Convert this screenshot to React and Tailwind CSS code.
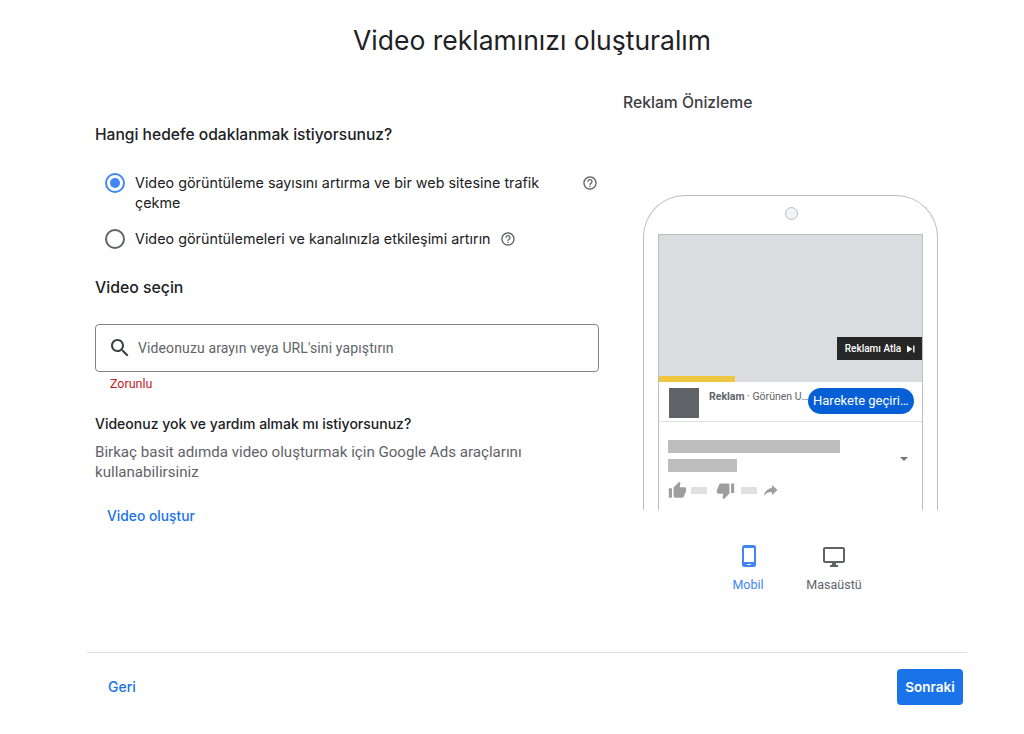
const heading = "font-['Inter',sans-serif]";

function HelpIcon() {
  return (
    <svg viewBox="0 0 24 24" className="h-4 w-4 fill-[#5f6368]">
      <path d="M11 18h2v-2h-2v2zm1-16C6.48 2 2 6.48 2 12s4.48 10 10 10 10-4.48 10-10S17.52 2 12 2zm0 18c-4.41 0-8-3.59-8-8s3.59-8 8-8 8 3.59 8 8-3.59 8-8 8zm0-14c-2.21 0-4 1.79-4 4h2c0-1.1.9-2 2-2s2 .9 2 2c0 2-3 1.75-3 5h2c0-2.25 3-2.5 3-5 0-2.21-1.79-4-4-4z" />
    </svg>
  );
}

function Radio({ checked }) {
  return (
    <span className={`flex h-5 w-5 shrink-0 items-center justify-center rounded-full border-2 ${checked ? 'border-[#4285f4]' : 'border-[#5f6368]'}`}>
      {checked ? <span className="h-[10px] w-[10px] rounded-full bg-[#4285f4]" /> : null}
    </span>
  );
}

function PhonePreview() {
  return (
    <div className="h-[315px] w-[295px] rounded-t-[42px] border-x border-t border-[#bdbdbd] px-[14px]">
      <div className="flex h-[38px] items-start justify-center pl-[1px] pt-[11px]">
        <span className="h-[13px] w-[13px] rounded-full border border-[#bdbdbd] bg-[#f1f3f4]" />
      </div>
      <div className="h-[276px] border-x border-t border-[#bdbdbd]">
        <div className="flex h-[141px] items-end justify-end bg-[#dadce0]">
          <div className="mb-[16px] flex h-[23px] w-[85px] items-center justify-center gap-[6px] bg-[#262626] pl-[1px] font-['Roboto',sans-serif] text-[10px] font-medium text-white">
            Reklamı Atla
            <svg viewBox="0 0 8 8" className="h-[8px] w-[8px] fill-white">
              <path d="M0 .5 5.5 4 0 7.5z" />
              <rect x="6.2" y=".5" width="1.3" height="7" />
            </svg>
          </div>
        </div>
        <div className="h-[6px] bg-[#dadce0]">
          <div className="h-[6px] w-[76px] bg-[#eec63f]" />
        </div>
        <div className="flex h-[40px] items-start border-b border-[#e0e0e0] pl-[10px] pt-[6px]">
          <div className="h-[30px] w-[30px] bg-[#5f6368]" />
          <div className="-mr-[8px] ml-[10px] w-[107px] truncate pr-[4px] pt-[2px] font-['Roboto',sans-serif] text-[10.5px] leading-[14px] text-[#5f6368]">
            <span className="font-bold">Reklam</span> · Görünen URL
          </div>
          <div className="relative h-[26px] w-[106px] rounded-full bg-[#065fd4] px-[5px] font-['Roboto',sans-serif] text-[13px] leading-[26px] text-white">
            <span className="block truncate">Harekete geçirici</span>
          </div>
        </div>
        <div className="flex">
          <div className="pl-[9px] pt-[18px]">
            <div className="h-[13px] w-[172px] bg-[#bdbdbd]" />
            <div className="mt-[6px] h-[13px] w-[69px] bg-[#bdbdbd]" />
            <div className="mt-[9px] flex items-center">
              <svg viewBox="0 0 24 24" className="h-[19px] w-[19px] fill-[#9e9e9e]">
                <path d="M1 21h4V9H1v12zm22-11c0-1.1-.9-2-2-2h-6.31l.95-4.57.03-.32c0-.41-.17-.79-.44-1.06L14.17 1 7.59 7.59C7.22 7.95 7 8.45 7 9v10c0 1.1.9 2 2 2h9c.83 0 1.54-.5 1.84-1.22l3.02-7.05c.09-.23.14-.47.14-.73v-2z" />
              </svg>
              <span className="ml-[4px] h-[7px] w-[16px] bg-[#e0e0e0]" />
              <svg viewBox="0 0 24 24" className="ml-[9px] h-[19px] w-[19px] fill-[#9e9e9e]">
                <path d="M15 3H6c-.83 0-1.54.5-1.84 1.22l-3.02 7.05c-.09.23-.14.47-.14.73v2c0 1.1.9 2 2 2h6.31l-.95 4.57-.03.32c0 .41.17.79.44 1.06L9.83 23l6.59-6.59c.36-.36.58-.86.58-1.41V5c0-1.1-.9-2-2-2zm4 0v12h4V3h-4z" />
              </svg>
              <span className="ml-[6px] h-[7px] w-[16px] bg-[#e0e0e0]" />
              <svg viewBox="0 0 16 14" className="ml-[6px] h-[13px] w-[15px] fill-[#9e9e9e]">
                <path d="M9.5 1 15.5 6.5 9.5 12V8.6C5.5 8.6 2.8 10 .8 13 1.6 8.5 4.4 5 9.5 4.4z" />
              </svg>
            </div>
          </div>
          <div className="ml-[60px] mt-[35px] h-0 w-0 border-x-[4px] border-t-[4px] border-x-transparent border-t-[#757575]" />
        </div>
      </div>
    </div>
  );
}

export default function App() {
  return (
    <div className="h-[734px] w-[1024px] overflow-hidden bg-white font-['Roboto',sans-serif] text-[#202124]">
      <h1 className={`${heading} pb-[1px] pl-[40px] pt-[22px] text-center text-[26.5px] leading-[36px]`}>Video reklamınızı oluşturalım</h1>

      <div className="flex h-[536px]">
        <div className="w-[643px] pl-[95px]">
          <h2 className={`${heading} mt-[64px] text-[15.6px] font-medium leading-[24px]`}>Hangi hedefe odaklanmak istiyorsunuz?</h2>

          <div className={`${heading} mt-[26px] text-[14.35px] leading-[20px]`}>
            <div className="flex items-start pl-[10px]">
              <Radio checked />
              <p className="ml-[10px] w-[432px]">Video görüntüleme sayısını artırma ve bir web sitesine trafik çekme</p>
              <span className="ml-[15px] mt-[2px]"><HelpIcon /></span>
            </div>
            <div className="mt-[16px] flex items-center pl-[10px]">
              <Radio />
              <p className="ml-[10px]">Video görüntülemeleri ve kanalınızla etkileşimi artırın</p>
              <span className="ml-[9px]"><HelpIcon /></span>
            </div>
          </div>

          <h2 className={`${heading} mt-[27px] text-[15.8px] font-medium leading-[24px]`}>Video seçin</h2>

          <div className="mt-[24px] flex h-[48px] w-[504px] items-center rounded border border-[#80868b] pl-[12px]">
            <svg viewBox="0 0 24 24" className="h-[24px] w-[24px] fill-[#3c4043]">
              <path d="M15.5 14h-.79l-.28-.27C15.41 12.59 16 11.11 16 9.5 16 5.91 13.09 3 9.5 3S3 5.91 3 9.5 5.91 16 9.5 16c1.61 0 3.09-.59 4.23-1.57l.27.28v.79l5 4.99L20.49 19l-4.99-5zm-6 0C7.01 14 5 11.99 5 9.5S7.01 5 9.5 5 14 7.01 14 9.5 11.99 14 9.5 14z" />
            </svg>
            <span className="ml-[6px] text-[14px] tracking-[0.12px] text-[#5f6368]">Videonuzu arayın veya URL'sini yapıştırın</span>
          </div>
          <p className="mt-[4px] pl-[15px] text-[12.5px] leading-[16px] text-[#c5221f]">Zorunlu</p>

          <p className={`${heading} mt-[22px] text-[14px] font-medium leading-[20px]`}>Videonuz yok ve yardım almak mı istiyorsunuz?</p>
          <p className="mt-[8px] w-[470px] text-[15.1px] leading-[20px] text-[#5f6368]">
            Birkaç basit adımda video oluşturmak için Google Ads araçlarını kullanabilirsiniz
          </p>
          <a className={`${heading} mt-[24px] block pl-[12px] text-[13.8px] font-medium leading-[20px] text-[#1a73e8]`}>Video oluştur</a>
        </div>

        <div className="w-[295px]">
          <h2 className={`${heading} ml-[-20px] mt-[32px] text-[15.7px] font-medium leading-[24px] text-[#3c4043]`}>Reklam Önizleme</h2>
          <div className="mt-[80px]">
            <PhonePreview />
          </div>
          <div className="mt-[35px] flex pl-[89px] text-[12.5px]">
            <div className="flex w-[32px] flex-col items-center text-[#4285f4]">
              <svg viewBox="0 0 14 22" className="ml-[2px] h-[22px] w-[14px]">
                <rect width="14" height="22" rx="2.5" fill="#4285f4" />
                <rect x="2" y="3" width="10" height="14" fill="#ffffff" />
                <rect x="5" y="19" width="4" height="1" fill="#ffffff" />
              </svg>
              <span className="mt-[9px]">Mobil</span>
            </div>
            <div className="ml-[42px] flex w-[56px] flex-col items-center text-[#5f6368]">
              <svg viewBox="0 0 24 24" className="h-[24px] w-[24px] fill-[#5f6368]">
                <path d="M21 2H3c-1.1 0-2 .9-2 2v12c0 1.1.9 2 2 2h7v2H8v2h8v-2h-2v-2h7c1.1 0 2-.9 2-2V4c0-1.1-.9-2-2-2zm0 14H3V4h18v12z" />
              </svg>
              <span className="mt-[7px]">Masaüstü</span>
            </div>
          </div>
        </div>
      </div>

      <div className="mx-[87px] mt-[57px] flex h-[67px] w-[880px] items-center justify-between border-t border-[#e0e0e0] pl-[21px] pr-[4px] pt-[2px]">
        <a className={`${heading} -mt-[2px] text-[14px] font-medium text-[#1a73e8]`}>Geri</a>
        <button className={`${heading} h-[36px] w-[66px] rounded bg-[#1a73e8] text-[13.5px] font-semibold text-white`}>Sonraki</button>
      </div>
    </div>
  );
}
